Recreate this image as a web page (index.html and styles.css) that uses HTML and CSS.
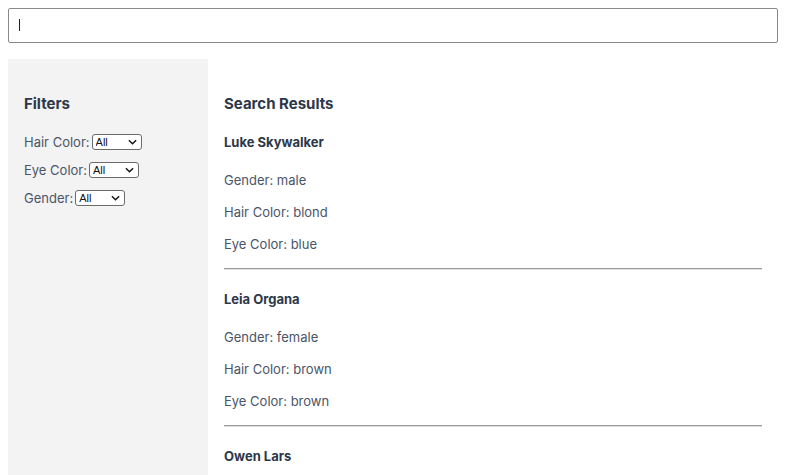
FILE: index.html
```html
<!DOCTYPE html>
<html lang="en">
<head>
<meta charset="utf-8">
<title>Search</title>
<link rel="stylesheet" href="styles.css">
</head>
<body>
<div class="app">
  <div class="search-wrap">
    <input class="search" type="text" aria-label="Search">
    <span class="caret"></span>
  </div>
  <div class="layout">
    <aside class="sidebar">
      <h2 class="title">Filters</h2>
      <div class="filters">
        <label class="filter">Hair Color:
          <span class="select-wrap">
            <select class="select"><option>All</option></select>
            <svg class="chev" viewBox="0 0 10 6" width="9" height="6"><path d="M1 1l4 4 4-4" fill="none" stroke="#111" stroke-width="1.6"/></svg>
          </span>
        </label>
        <label class="filter">Eye Color:
          <span class="select-wrap">
            <select class="select"><option>All</option></select>
            <svg class="chev" viewBox="0 0 10 6" width="9" height="6"><path d="M1 1l4 4 4-4" fill="none" stroke="#111" stroke-width="1.6"/></svg>
          </span>
        </label>
        <label class="filter">Gender:
          <span class="select-wrap">
            <select class="select"><option>All</option></select>
            <svg class="chev" viewBox="0 0 10 6" width="9" height="6"><path d="M1 1l4 4 4-4" fill="none" stroke="#111" stroke-width="1.6"/></svg>
          </span>
        </label>
      </div>
    </aside>
    <main class="results">
      <h2 class="title">Search Results</h2>
      <div class="person">
        <h3 class="name">Luke Skywalker</h3>
        <p class="attr">Gender: male</p>
        <p class="attr">Hair Color: blond</p>
        <p class="attr">Eye Color: blue</p>
        <hr class="rule">
      </div>
      <div class="person">
        <h3 class="name">Leia Organa</h3>
        <p class="attr">Gender: female</p>
        <p class="attr">Hair Color: brown</p>
        <p class="attr">Eye Color: brown</p>
        <hr class="rule">
      </div>
      <div class="person">
        <h3 class="name">Owen Lars</h3>
      </div>
    </main>
  </div>
</div>
</body>
</html>
```
FILE: styles.css
```css
html, body {
  margin: 0;
  padding: 0;
  background: #fff;
}
body {
  margin: 8px 8px 0;
  font-family: Inter, "Noto Sans", sans-serif;
  color: #4a5568;
}
.app {
  width: 770px;
}
.search-wrap {
  position: relative;
}
.search {
  display: block;
  box-sizing: border-box;
  width: 770px;
  height: 35px;
  margin: 0;
  padding: 0 10px;
  border: 1px solid #8a8a8a;
  border-radius: 2px;
  font: 13px Inter, sans-serif;
  outline: none;
}
.caret {
  position: absolute;
  left: 11px;
  top: 11px;
  width: 1px;
  height: 12px;
  background: #222;
}
.layout {
  display: flex;
  margin-top: 16px;
  min-height: 417px;
}
.sidebar {
  width: 200px;
  flex: none;
  box-sizing: border-box;
  background: #f3f3f3;
  padding: 35px 16px 0;
}
.title {
  margin: 0;
  font-size: 15px;
  line-height: 20px;
  font-weight: 700;
  color: #2d3748;
}
.filters {
  display: flex;
  flex-direction: column;
  gap: 8px;
  margin-top: 18px;
}
.filter {
  display: flex;
  align-items: center;
  gap: 2px;
  font-size: 13px;
  line-height: 20px;
}
.select-wrap {
  position: relative;
  display: inline-flex;
}
.select {
  appearance: none;
  -webkit-appearance: none;
  box-sizing: border-box;
  width: 50px;
  height: 16px;
  margin: 0;
  padding: 0 0 0 3px;
  border: 1px solid #6b6b6b;
  border-radius: 3px;
  background: #fff;
  font: 11px "Liberation Sans", Arial, sans-serif;
  color: #111;
  line-height: 14px;
}
.chev {
  position: absolute;
  right: 5px;
  top: 5px;
  pointer-events: none;
}
.results {
  flex: 1;
  padding: 35px 16px 0;
}
.person {
  display: flex;
  flex-direction: column;
  margin-top: 18px;
}
.person + .person {
  margin-top: 19px;
}
.name {
  margin: 0 0 18px;
  font-size: 13px;
  line-height: 20px;
  font-weight: 700;
  color: #2d3748;
}
.attr {
  margin: 0 0 12px;
  font-size: 13px;
  line-height: 20px;
}
.attr:last-of-type {
  margin-bottom: 14px;
}
.rule {
  width: 100%;
  box-sizing: border-box;
  margin: 0;
  border: 0;
  border-top: 1px solid #9a9a9a;
  border-bottom: 1px solid #e0e0e0;
  height: 0;
}
```
